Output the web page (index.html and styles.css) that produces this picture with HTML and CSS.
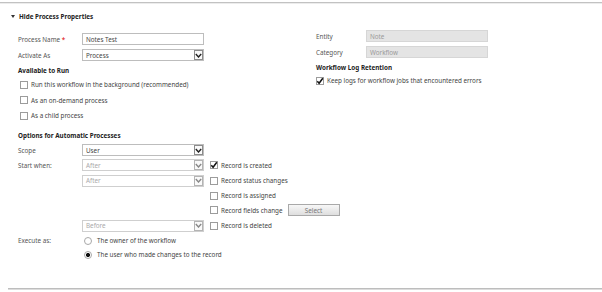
FILE: index.html
```html
<!DOCTYPE html>
<html lang="en-US">
<head>
	<title>Process Properties</title>
	<link rel="stylesheet" href="styles.css">
</head>
<body>
	<div class="topRule"></div>
	<div class="section">
		<div class="sectionHead"><span class="caret"></span>Hide Process Properties</div>
		<div class="columns">
			<div class="leftCol">
				<div class="field">
					<span class="lbl">Process Name <span class="req">*</span></span>
					<div class="textbox">Notes Test</div>
				</div>
				<div class="field">
					<span class="lbl">Activate As</span>
					<div class="select"><span>Process</span><span class="drop"><svg width="7" height="5" viewBox="0 0 7 5"><polyline points="0.8,1 3.5,4 6.2,1" /></svg></span></div>
				</div>

				<div class="groupHead">Available to Run</div>
				<div class="runList">
					<div class="check"><span class="box"></span>Run this workflow in the background (recommended)</div>
					<div class="check"><span class="box"></span>As an on-demand process</div>
					<div class="check"><span class="box"></span>As a child process</div>
				</div>

				<div class="groupHead spaced">Options for Automatic Processes</div>
				<div class="line">
					<span class="lbl">Scope</span>
					<div class="select"><span>User</span><span class="drop"><svg width="7" height="5" viewBox="0 0 7 5"><polyline points="0.8,1 3.5,4 6.2,1" /></svg></span></div>
				</div>
				<div class="startGrid">
					<span class="lbl">Start when:</span>
					<div class="select off"><span>After</span><span class="drop"><svg width="7" height="5" viewBox="0 0 7 5"><polyline points="0.8,1 3.5,4 6.2,1" /></svg></span></div>
					<div class="check flush"><span class="box"><svg width="8" height="8" viewBox="0 0 8 8"><path d="M1.3 4.2 L3.1 6.2 L6.8 1.2" /></svg></span>Record is created</div>

					<span></span>
					<div class="select off"><span>After</span><span class="drop"><svg width="7" height="5" viewBox="0 0 7 5"><polyline points="0.8,1 3.5,4 6.2,1" /></svg></span></div>
					<div class="check flush"><span class="box"></span>Record status changes</div>

					<span></span><span></span>
					<div class="check flush"><span class="box"></span>Record is assigned</div>

					<span></span><span></span>
					<div class="check flush"><span class="box"></span>Record fields change<span class="btn">Select</span></div>

					<span></span>
					<div class="select off"><span>Before</span><span class="drop"><svg width="7" height="5" viewBox="0 0 7 5"><polyline points="0.8,1 3.5,4 6.2,1" /></svg></span></div>
					<div class="check flush"><span class="box"></span>Record is deleted</div>
				</div>
				<div class="line tight">
					<span class="lbl">Execute as:</span>
					<span class="radio"></span>The owner of the workflow
				</div>
				<div class="line tight">
					<span class="lbl"></span>
					<span class="radio on"></span>The user who made changes to the record
				</div>
			</div>

			<div class="rightCol">
				<div class="field">
					<span class="lbl narrow">Entity</span>
					<div class="textbox locked">Note</div>
				</div>
				<div class="field">
					<span class="lbl narrow">Category</span>
					<div class="textbox locked">Workflow</div>
				</div>
				<div class="groupHead">Workflow Log Retention</div>
				<div class="check flush"><span class="box"><svg width="8" height="8" viewBox="0 0 8 8"><path d="M1.3 4.2 L3.1 6.2 L6.8 1.2" /></svg></span>Keep logs for workflow jobs that encountered errors</div>
			</div>
		</div>
	</div>
	<div class="bottomRule"></div>
</body>
</html>
```

FILE: styles.css
```css
body {
	margin: 0;
	font-family: "Noto Sans", "Open Sans", sans-serif;
	font-size: 6.3px;
	color: #444;
	background: #fff;
}

.topRule {
	margin-top: 2px;
	border-top: 1px solid #c2c2c2;
	border-bottom: 1px solid #ececec;
}

.section {
	padding: 7px 0 0 10px;
}

.sectionHead {
	display: flex;
	align-items: center;
	height: 10px;
	font-weight: bold;
	color: #222;
}

.caret {
	width: 0;
	height: 0;
	border-left: 2px solid transparent;
	border-right: 2px solid transparent;
	border-top: 3px solid #333;
	margin: 1px 4px 0 1px;
}

.columns {
	display: flex;
	margin-top: 12px;
	padding-left: 8px;
}

.leftCol {
	width: 298px;
	flex: none;
}

.rightCol {
	margin-top: -3px;
}

.field {
	display: flex;
	align-items: center;
	height: 12px;
	margin-bottom: 4px;
}

.line {
	display: flex;
	align-items: center;
	height: 15px;
}

.line.tight {
	height: 14px;
}

.lbl {
	width: 64px;
	flex: none;
	color: #555;
}

.lbl.narrow {
	width: 50px;
}

.req {
	color: #d00;
}

.textbox,
.select {
	width: 122px;
	height: 12px;
	box-sizing: border-box;
	border: 1px solid #bdbdbd;
	padding-left: 3px;
	display: flex;
	align-items: center;
	justify-content: space-between;
	color: #444;
	background: #fff;
}

.textbox.locked {
	background: #e4e4e4;
	border-color: #d6d6d6;
	color: #9a9a9a;
}

.select.off {
	color: #aaa;
	border-color: #cfcfcf;
}

.drop {
	width: 9px;
	height: 10px;
	box-sizing: border-box;
	border: 1px solid #8c8c8c;
	display: flex;
	align-items: center;
	justify-content: center;
	background: #fafafa;
}

.drop svg polyline {
	fill: none;
	stroke: #222;
	stroke-width: 1.4;
}

.select.off .drop {
	border-color: #b4b4b4;
}

.select.off .drop svg polyline {
	stroke: #888;
}

.groupHead {
	height: 10px;
	line-height: 10px;
	margin-top: 5px;
	font-weight: bold;
	color: #222;
}

.groupHead.spaced {
	margin-top: 7px;
	margin-bottom: 2px;
}

.runList {
	padding-top: 1px;
}

.runList .check {
	height: 15.5px;
}

.check {
	display: flex;
	align-items: center;
	height: 15px;
	padding-left: 2px;
	color: #444;
	white-space: nowrap;
}

.check.flush {
	padding-left: 0;
}

.box {
	width: 8px;
	height: 8px;
	box-sizing: border-box;
	border: 1px solid #9c9c9c;
	background: #fff;
	margin-right: 3px;
	flex: none;
	position: relative;
}

.box svg {
	position: absolute;
	left: -1px;
	top: -1px;
}

.box svg path {
	fill: none;
	stroke: #111;
	stroke-width: 1.5;
}

.startGrid {
	display: grid;
	grid-template-columns: 64px 128px auto;
	grid-template-rows: 15px 16px 14px 15px 16px;
	align-items: center;
}

.btn {
	margin-left: 5px;
	width: 52px;
	height: 12px;
	box-sizing: border-box;
	border: 1px solid #a9a9a9;
	background: linear-gradient(#f7f7f7, #dedede);
	color: #777;
	display: flex;
	align-items: center;
	justify-content: center;
}

.radio {
	width: 8px;
	height: 8px;
	box-sizing: border-box;
	border: 1px solid #a8a8a8;
	border-radius: 50%;
	margin: 0 5px 0 2px;
	background: #fff;
	flex: none;
}

.radio.on {
	background: radial-gradient(circle, #111 0 1.8px, #fff 2.3px);
}

.bottomRule {
	margin: 26px 0 0 8px;
	border-top: 1px solid #bdbdbd;
	border-bottom: 1px solid #dcdcdc;
}
```
